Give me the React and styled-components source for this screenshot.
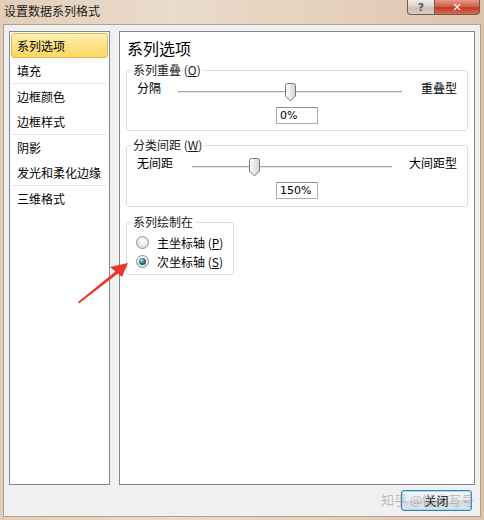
import styled, { createGlobalStyle } from 'styled-components'

const GlobalStyle = createGlobalStyle`
  html, body {
    margin: 0;
    padding: 0;
  }
  body {
    width: 484px;
    height: 520px;
    overflow: hidden;
    font-family: "Noto Sans CJK SC", "Noto Sans", sans-serif;
    font-size: 12px;
    color: #000;
  }
`

const Window = styled.div`
  position: relative;
  width: 484px;
  height: 520px;
  display: flex;
  flex-direction: column;
  background: linear-gradient(90deg, #e3cdb8 0%, #eadbcb 35%, #e4d0bd 70%, #dcc4ae 100%);
`

const TitleBar = styled.div`
  height: 24px;
  display: flex;
  align-items: flex-start;
  padding-left: 4px;
`

const Title = styled.div`
  line-height: 14px;
  margin-top: 4px;
  color: #1a1a1a;
`

const CaptionButtons = styled.div`
  margin-left: auto;
  margin-right: 4px;
  display: flex;
  height: 15px;
`

const CaptionButton = styled.div`
  box-sizing: border-box;
  width: ${(p) => p.$w}px;
  height: 15px;
  display: flex;
  align-items: center;
  justify-content: center;
  border: 1px solid #6e5e52;
  border-top: none;
  font-family: "DejaVu Sans", sans-serif;
  font-weight: bold;
  font-size: 11px;
  color: ${(p) => (p.$close ? '#fff' : '#5a5a5a')};
  background: ${(p) =>
    p.$close
      ? 'linear-gradient(180deg, #e59a8a 0%, #d5604d 45%, #c33a26 55%, #d86a52 100%)'
      : 'linear-gradient(180deg, #f0ebe6 0%, #ddd4cc 45%, #cbbfb4 55%, #d8cdc2 100%)'};
  border-radius: ${(p) => (p.$close ? '0 0 4px 0' : '0 0 0 4px')};
  border-left: ${(p) => (p.$close ? 'none' : '1px solid #6e5e52')};
`

const Client = styled.div`
  flex: 1;
  margin: 0 3px 3px;
  border: 1px solid #b6a08c;
  background: #f0f0f0;
  padding: 6px 5px 0;
  display: flex;
  flex-direction: column;
`

const Panes = styled.div`
  display: flex;
  gap: 9px;
  height: 454px;
`

const NavList = styled.div`
  box-sizing: border-box;
  width: 101px;
  border: 1px solid #828790;
  background: #fff;
  padding: 1px;
`

const NavItem = styled.div`
  box-sizing: border-box;
  height: 25px;
  line-height: 23px;
  padding-left: 5px;
  border: 1px solid ${(p) => (p.$active ? '#e6b54c' : 'transparent')};
  border-radius: 3px;
  background: ${(p) =>
    p.$active ? 'linear-gradient(180deg, #fff1b0 0%, #fde38a 45%, #fbd768 100%)' : 'transparent'};
`

const NavSep = styled.div`
  height: 1px;
  margin: 0 1px;
  background: #e6e6e6;
`

const Content = styled.div`
  flex: 1;
  box-sizing: border-box;
  border: 1px solid #828790;
  background: #fff;
  padding: 7px 6px;
  display: flex;
  flex-direction: column;
`

const Heading = styled.div`
  font-size: 16px;
  line-height: 18px;
  padding-left: 1px;
`

const Group = styled.fieldset`
  margin: ${(p) => p.$mt}px 0 0;
  padding: ${(p) => p.$pt}px 10px ${(p) => p.$pb}px 4px;
  border: 1px solid #d5dfe5;
  border-radius: 3px;
  min-width: 0;
  align-self: ${(p) => (p.$fit ? 'flex-start' : 'stretch')};
`

const Legend = styled.legend`
  padding: 0 2px;
  line-height: 16px;
  color: #1a1a1a;
`

const SliderRow = styled.div`
  display: flex;
  align-items: flex-start;
  height: 20px;
  padding-left: 6px;
`

const Label = styled.span`
  line-height: 16px;
  white-space: nowrap;
  margin-left: ${(p) => (p.$right ? 'auto' : '0')};
`

const Track = styled.div`
  position: relative;
  height: 20px;
  width: ${(p) => p.$w}px;
  margin-left: ${(p) => p.$ml}px;
`

const TrackLine = styled.div`
  margin-top: 11px;
  height: 1px;
  background: #a7a7a7;
  box-shadow: 0 1px 0 #e4e4e4;
`

const Thumb = styled.svg`
  position: absolute;
  top: 3px;
`

const ValueRow = styled.div`
  display: flex;
  justify-content: center;
  margin-top: 7px;
  padding-left: 6px;
`

const ValueBox = styled.div`
  box-sizing: border-box;
  width: 42px;
  height: 17px;
  border: 1px solid #abadb3;
  border-top-color: #8e8f8f;
  padding-left: 3px;
  line-height: 15px;
  font-family: "DejaVu Sans", sans-serif;
  font-size: 11px;
`

const RadioRow = styled.div`
  display: flex;
  align-items: center;
  gap: 8px;
  height: 19px;
  padding-left: 5px;
`

const RadioCircle = styled.span`
  box-sizing: border-box;
  width: 13px;
  height: 13px;
  border-radius: 50%;
  border: 1px solid #8e8f8f;
  background: radial-gradient(circle at 50% 35%, #ffffff 0%, #eeeeee 45%, #cfcfcf 100%);
  display: flex;
  align-items: center;
  justify-content: center;
`

const RadioDot = styled.span`
  width: 7px;
  height: 7px;
  border-radius: 50%;
  background: radial-gradient(circle at 40% 35%, #a6e4ef 0%, #2d7888 45%, #103e4a 100%);
`

const Footer = styled.div`
  display: flex;
  justify-content: flex-end;
  padding: 5px 3px 0 0;
`

const CloseButton = styled.div`
  box-sizing: border-box;
  width: 71px;
  height: 21px;
  border: 1px solid #3c7fb1;
  border-radius: 3px;
  box-shadow: inset 0 0 0 1px #9fdcf2;
  background: linear-gradient(180deg, #f6f8f9 0%, #e6ebee 50%, #cfd8dc 51%, #dfe6e9 100%);
  display: flex;
  align-items: center;
  justify-content: center;
  line-height: 19px;
`

const Watermark = styled.div`
  position: absolute;
  left: 381px;
  top: 491px;
  font-size: 13px;
  line-height: 18px;
  color: rgba(150, 150, 150, 0.6);
  pointer-events: none;
  white-space: nowrap;
`

const Arrow = styled.svg`
  position: absolute;
  left: 70px;
  top: 255px;
  pointer-events: none;
`

function Slider({ ml, w, value }) {
  return (
    <Track $ml={ml} $w={w}>
      <TrackLine />
      <Thumb width="11" height="19" viewBox="0 0 11 19" style={{ left: `${(value / 100) * w - 5}px` }}>
        <defs>
          <linearGradient id="tg" x1="0" y1="0" x2="1" y2="0">
            <stop offset="0" stopColor="#ffffff" />
            <stop offset="1" stopColor="#d2d2d2" />
          </linearGradient>
        </defs>
        <path
          d="M2.5 0.5 H8.5 Q10.5 0.5 10.5 2.5 V13 L5.5 18 L0.5 13 V2.5 Q0.5 0.5 2.5 0.5 Z"
          fill="url(#tg)"
          stroke="#787878"
        />
      </Thumb>
    </Track>
  )
}

function Radio({ checked, children }) {
  return (
    <RadioRow>
      <RadioCircle>{checked && <RadioDot />}</RadioCircle>
      <Label>{children}</Label>
    </RadioRow>
  )
}

export default function App() {
  return (
    <>
      <GlobalStyle />
      <Window>
        <TitleBar>
          <Title>设置数据系列格式</Title>
          <CaptionButtons>
            <CaptionButton $w={28}>?</CaptionButton>
            <CaptionButton $w={45} $close>
              ✕
            </CaptionButton>
          </CaptionButtons>
        </TitleBar>
        <Client>
          <Panes>
            <NavList>
              <NavItem $active>系列选项</NavItem>
              <NavItem>填充</NavItem>
              <NavSep />
              <NavItem>边框颜色</NavItem>
              <NavItem>边框样式</NavItem>
              <NavSep />
              <NavItem>阴影</NavItem>
              <NavItem>发光和柔化边缘</NavItem>
              <NavSep />
              <NavItem>三维格式</NavItem>
            </NavList>
            <Content>
              <Heading>系列选项</Heading>
              <Group $mt={5} $pt={2} $pb={6}>
                <Legend>
                  系列重叠 (<u>O</u>)
                </Legend>
                <SliderRow>
                  <Label>分隔</Label>
                  <Slider ml={17} w={224} value={50} />
                  <Label $right>重叠型</Label>
                </SliderRow>
                <ValueRow>
                  <ValueBox>0%</ValueBox>
                </ValueRow>
              </Group>
              <Group $mt={6} $pt={2} $pb={7}>
                <Legend>
                  分类间距 (<u>W</u>)
                </Legend>
                <SliderRow>
                  <Label>无间距</Label>
                  <Slider ml={19} w={200} value={31} />
                  <Label $right>大间距型</Label>
                </SliderRow>
                <ValueRow>
                  <ValueBox>150%</ValueBox>
                </ValueRow>
              </Group>
              <Group $mt={7} $pt={3} $pb={3} $fit>
                <Legend>系列绘制在</Legend>
                <Radio>
                  主坐标轴 (<u>P</u>)
                </Radio>
                <Radio checked>
                  次坐标轴 (<u>S</u>)
                </Radio>
              </Group>
            </Content>
          </Panes>
          <Footer>
            <CloseButton>关闭</CloseButton>
          </Footer>
        </Client>
        <Watermark>知乎 @懒人写号</Watermark>
        <Arrow width="70" height="55" viewBox="0 0 70 55">
          <path d="M8 47 L46 16 L48 18.5 L9 48.5 Z" fill="#e8372b" />
          <path d="M58 8 L40 12 L52 22 Z" fill="#e8372b" />
        </Arrow>
      </Window>
    </>
  )
}
